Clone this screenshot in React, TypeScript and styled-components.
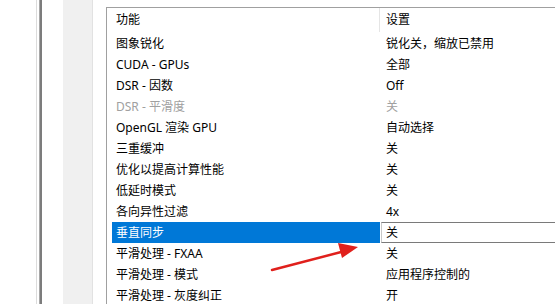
import React from "react";
import styled, { createGlobalStyle } from "styled-components";

const Global = createGlobalStyle`
  html, body { margin: 0; padding: 0; background: #fff; }
  body { font-family: "Noto Sans", "Noto Sans CJK SC", sans-serif; }
`;

const Page = styled.div`
  position: relative;
  display: flex;
  width: 555px;
  height: 304px;
  overflow: hidden;
  background: #fff;
`;

const LeftMargin = styled.div`
  width: 36px;
  flex: none;
`;

const FrameEdge = styled.div`
  width: 6px;
  flex: none;
  display: flex;
  border-left: 1px solid #dcdcdc;
  box-sizing: border-box;
  &::after {
    content: "";
    width: 2px;
    margin-left: auto;
    background: #7c7c7c;
    border-left: 1px solid #a8a8a8;
  }
`;

const Gutter = styled.div<{ $w: number }>`
  width: ${(p) => p.$w}px;
  flex: none;
`;

const SideBand = styled.div`
  width: 29px;
  flex: none;
  background: #f0f0f0;
  border-right: 1px solid #e2e2e2;
`;

const TableBox = styled.div`
  flex: 1;
  margin-top: 7px;
  border-top: 1px solid #a0a0a0;
  border-left: 1px solid #a0a0a0;
  font-size: 12px;
  color: #000;
`;

const Row = styled.div<{ $header?: boolean }>`
  display: grid;
  grid-template-columns: 268px 1fr;
  height: ${(p) => (p.$header ? 25 : 21)}px;
  line-height: ${(p) => (p.$header ? 24 : 21)}px;
  padding-left: 5px;
`;

const NameCell = styled.div<{ $selected?: boolean; $disabled?: boolean }>`
  padding-left: 4px;
  white-space: nowrap;
  background: ${(p) => (p.$selected ? "#0078d7" : "transparent")};
  color: ${(p) => (p.$selected ? "#fff" : p.$disabled ? "#a0a0a0" : "#000")};
`;

const HeaderName = styled.div`
  padding-left: 4px;
  border-right: 1px solid #e5e5e5;
  margin-bottom: 1px;
`;

const ValueCell = styled.div<{ $disabled?: boolean }>`
  padding-left: 6px;
  white-space: nowrap;
  color: ${(p) => (p.$disabled ? "#a0a0a0" : "#000")};
`;

const EditCell = styled.div`
  box-sizing: border-box;
  margin-left: 1px;
  margin-right: -4px;
  padding-left: 4px;
  border-top: 1px solid #7a7a7a;
  border-bottom: 1px solid #7a7a7a;
  border-left: 1px solid #c8c8c8;
  line-height: 19px;
  background: #fff;
`;

const ArrowLayer = styled.svg`
  position: absolute;
  left: 0;
  top: 0;
  pointer-events: none;
`;

type Item = { name: string; value: string; disabled?: boolean; selected?: boolean };

const items: Item[] = [
  { name: "图象锐化", value: "锐化关，缩放已禁用" },
  { name: "CUDA - GPUs", value: "全部" },
  { name: "DSR - 因数", value: "Off" },
  { name: "DSR - 平滑度", value: "关", disabled: true },
  { name: "OpenGL 渲染 GPU", value: "自动选择" },
  { name: "三重缓冲", value: "关" },
  { name: "优化以提高计算性能", value: "关" },
  { name: "低延时模式", value: "关" },
  { name: "各向异性过滤", value: "4x" },
  { name: "垂直同步", value: "关", selected: true },
  { name: "平滑处理 - FXAA", value: "关" },
  { name: "平滑处理 - 模式", value: "应用程序控制的" },
  { name: "平滑处理 - 灰度纠正", value: "开" },
];

export default function App() {
  return (
    <>
      <Global />
      <Page>
        <LeftMargin />
        <FrameEdge />
        <Gutter $w={21} />
        <SideBand />
        <Gutter $w={13} />
        <TableBox>
          <Row $header>
            <HeaderName>功能</HeaderName>
            <ValueCell>设置</ValueCell>
          </Row>
          {items.map((it) => (
            <Row key={it.name}>
              <NameCell $selected={it.selected} $disabled={it.disabled}>
                {it.name}
              </NameCell>
              {it.selected ? (
                <EditCell>{it.value}</EditCell>
              ) : (
                <ValueCell $disabled={it.disabled}>{it.value}</ValueCell>
              )}
            </Row>
          ))}
        </TableBox>
        <ArrowLayer width="555" height="304" viewBox="0 0 555 304">
          <line x1="272" y1="270" x2="345" y2="251" stroke="#e0201c" strokeWidth="2.5" strokeLinecap="round" />
          <polygon points="358,247 338,243 342,258" fill="#e0201c" />
        </ArrowLayer>
      </Page>
    </>
  );
}
